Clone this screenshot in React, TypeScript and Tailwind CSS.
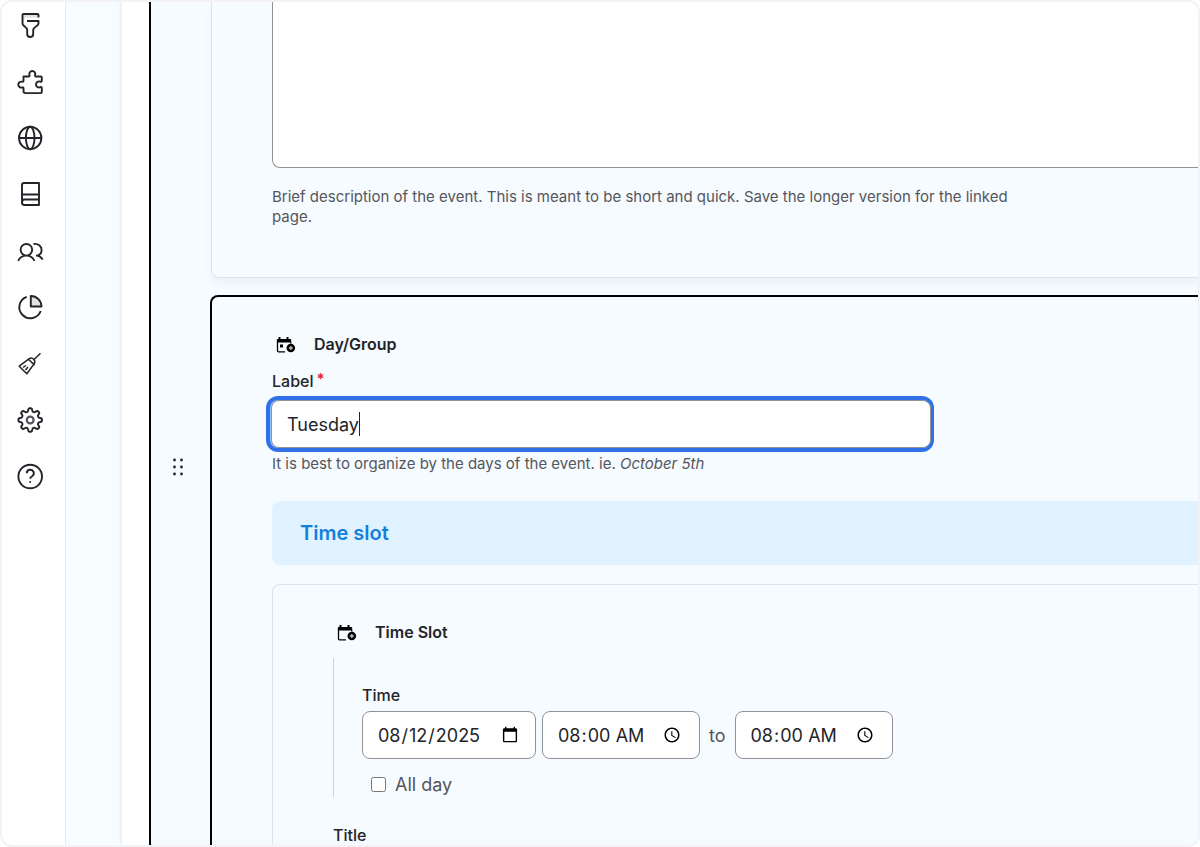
import { useState } from 'react';
import type { ReactNode } from 'react';

type NavItem = {
  label: string;
  icon: ReactNode;
};

// outline of the settings cog, 8 rounded teeth
function gearPath(cx: number, cy: number) {
  const pts: string[] = [];
  for (let i = 0; i < 96; i++) {
    const a = (i / 96) * Math.PI * 2;
    const wave = Math.tanh(2.2 * Math.cos(8 * a));
    const r = 10.2 + 1.6 * wave;
    pts.push(`${(cx + r * Math.sin(a)).toFixed(2)} ${(cy - r * Math.cos(a)).toFixed(2)}`);
  }
  return `M${pts.join('L')}Z`;
}

const navItems: NavItem[] = [
  {
    label: 'Appearance',
    icon: (
      <>
        <path d="M6 2.5h15v3H9L6 9z" fill="#e2e2e2" stroke="none" />
        <path d="M21.5 5.5V3a1 1 0 0 0-1-1h-14a1 1 0 0 0-1 1v8.5c0 3 4.7 3 4.7 6.500v4a3 3 0 0 0 6 0v-4c0-3.5 5.3-3.5 5.3-6.5V9H10" />
      </>
    ),
  },
  {
    label: 'Extend',
    icon: (
      <path d="M6.5 8.5h5.2c.8 0 1-.6.8-1.4a3 3 0 1 1 5.6 0c-.2.8 0 1.4.8 1.4h4.9a1 1 0 0 1 1 1v3.2c0 .9-.7 1.1-1.5 1a3 3 0 1 0 0 5.4c.8-.2 1.5.1 1.5 1v4a1 1 0 0 1-1 1H8.5c-1.200 0-2-.8-2-2v-2.800c0-.9-.6-1-1.4-.8a3 3 0 1 1 0-5.800c.8.2 1.4 0 1.4-.9z" />
    ),
  },
  {
    label: 'Languages',
    icon: (
      <>
        <circle cx="13.2" cy="13" r="11.2" />
        <ellipse cx="13.2" cy="13" rx="4.3" ry="11.2" />
        <path d="M2 13h22.4" />
      </>
    ),
  },
  {
    label: 'Content',
    icon: (
      <path d="M22 2H7a2 2 0 0 0-2 2v17.5A2.5 2.5 0 0 0 7.5 24H22zM5 13.5h17M22 18.5H7.5A2.5 2.5 0 0 0 5 21" />
    ),
  },
  {
    label: 'People',
    icon: (
      <path d="M9.4 6a5.8 5.8 0 1 1 0 11.6a5.8 5.8 0 1 1 0-11.6M1.200 22.800c1.600-3.600 4.600-5.200 8.200-5.200s6.400 1.600 8 5.200M16.600 6c4.400-.8 8 2 8 5.900c0 2.600-1.600 4.800-4.200 5.700H19M20.400 17.600c2.400.5 4 1.600 5.200 4" />
    ),
  },
  {
    label: 'Reports',
    icon: (
      <>
        <path d="M13.8 12.5V2c6 0 10.7 4.7 10.7 10.5z" fill="#e2e2e2" />
        <path d="M9.7 2.9A11 11 0 1 0 23.7 17" />
      </>
    ),
  },
  {
    label: 'Clear cache',
    icon: (
      <g strokeWidth="1.5">
        <path d="M23.5 3.3L16.500 10M12.3 8.7c1.5-1 3.3-.6 4.4.6s1.4 3.2.4 4.6L9.8 23.8L2.2 16.2zM11.500 9.3l6 5.8M6 17.5l3-2M8.5 20l2.5-3" />
      </g>
    ),
  },
  {
    label: 'Configuration',
    icon: (
      <>
        <path d={gearPath(13.2, 13)} />
        <circle cx="13.2" cy="13" r="3.4" stroke="#55555b" strokeWidth="2.2" />
      </>
    ),
  },
  {
    label: 'Help',
    icon: (
      <>
        <circle cx="13.2" cy="13.500" r="11.8" />
        <path d="M9.8 10.300a3.500 3.500 0 1 1 5.300 2.900c-1.300.8-1.900 1.300-1.900 2.500" />
        <circle cx="13.2" cy="19" r="1" fill="#232429" stroke="none" />
      </>
    ),
  },
];

function CalendarPlus({ dot = false }: { dot?: boolean }) {
  return (
    <svg width="20" height="18" viewBox="0 0 20 18" fill="none" aria-hidden="true">
      <path d="M3.5 2v3M11.5 2v3" stroke="#000" strokeWidth="2" />
      <path d="M1.3 4.500h13.400V7H1.3z" fill="#000" stroke="#000" strokeLinejoin="round" />
      <path d="M1.5 7v8.800a1 1 0 0 0 1 1H9M14.8 7v1.5" stroke="#000" strokeWidth="1.3" />
      {dot && <path d="M4 9.500h3v3H4z" fill="#000" />}
      <circle cx="14.8" cy="13" r="4.3" fill="#000" />
      <path d="M14.8 11v4M12.8 13h4" stroke="#b9bdc1" strokeWidth="1.4" />
    </svg>
  );
}

const field =
  'h-12 rounded-lg border border-[#919297] bg-white text-[18px] text-[#232429] outline-none';

export default function App() {
  const [label, setLabel] = useState('Tuesday');
  const [date, setDate] = useState('2025-08-12');
  const [start, setStart] = useState('08:00');
  const [end, setEnd] = useState('08:00');
  const [allDay, setAllDay] = useState(false);

  return (
    <div className="h-screen bg-white font-['Inter',sans-serif] text-[#232429]">
      <div className="flex h-full overflow-hidden rounded-xl border-2 border-[#f3f3f5] bg-white">

        {/* SIDEBAR */}
        <nav className="w-16 shrink-0 border-r border-[#e6eaee] bg-white pt-[10px] pl-[15px]">
          <div className="flex h-[477px] flex-col justify-between">
            {navItems.map((item) => (
              <button key={item.label} aria-label={item.label} className="size-[26px]">
                <svg
                  width="26"
                  height="26"
                  viewBox="0 0 26 26"
                  fill="none"
                  stroke="#232429"
                  strokeWidth="1.9"
                  strokeLinejoin="round"
                  className="overflow-visible"
                >
                  {item.icon}
                </svg>
              </button>
            ))}
          </div>
        </nav>

        <div className="w-14 shrink-0 bg-[#f6fcff]" />

        {/* FORM */}
        <main className="flex min-w-0 flex-1 bg-white pl-[27px] shadow-[0_0_4px_rgba(0,0,0,0.15)]">
          <div className="min-w-0 flex-1 border-l-2 border-black bg-[#f6fbff]">

            {/* DESCRIPTION */}
            <section className="ml-[60px] rounded-bl-lg border-b border-l border-[#dfe4e9] bg-[#f6fbff] pb-[50px] pl-[60px] shadow-[0_6px_8px_rgba(0,0,0,0.04)]">
              <textarea
                aria-label="Description"
                className="block h-[166px] w-full resize-none rounded-bl-lg border-b border-l border-[#919297] bg-white outline-none"
              />
              <p className="mt-[19px] max-w-[760px] text-[15px] leading-5 text-[#55565b]">
                Brief description of the event. This is meant to be short and quick. Save the longer version for the linked page.
              </p>
            </section>

            {/* DAY / GROUP */}
            <div className="mt-[17px] flex items-start">
              <button aria-label="Drag to re-order" className="mt-[162px] flex w-[59px] shrink-0 justify-center pr-[6px]">
                <svg width="12" height="20" viewBox="0 0 12 20" fill="#232429">
                  <circle cx="2.5" cy="3" r="1.4" />
                  <circle cx="9.5" cy="3" r="1.4" />
                  <circle cx="2.5" cy="10" r="1.4" />
                  <circle cx="9.5" cy="10" r="1.4" />
                  <circle cx="2.5" cy="17" r="1.4" />
                  <circle cx="9.5" cy="17" r="1.4" />
                </svg>
              </button>

              <section className="min-w-0 flex-1 rounded-tl-lg border-t-2 border-l-2 border-black bg-[#f6fbff] pt-[35px] pl-[60px]">
                <div className="flex h-6 items-center gap-[18px] pl-1">
                  <CalendarPlus dot />
                  <h3 className="text-[16px] font-semibold">Day/Group</h3>
                </div>

                <label htmlFor="label" className="mt-[15px] block text-[16px] leading-5 font-medium">
                  Label<span className="ml-[3px] align-top text-[15px] leading-4 font-semibold text-[#dc2323]">*</span>
                </label>
                <div className="relative mt-[9px] -ml-px max-w-[660px]">
                  <input
                    id="label"
                    value={label}
                    onChange={(e) => setLabel(e.target.value)}
                    className={`${field} block w-full px-[15px] shadow-[-1px_0_0_0_#8cc4ff,-1px_0_0_4px_#3071ea]`}
                  />
                  <span className="absolute top-3 left-[88px] h-6 w-px bg-[#232429]" />
                </div>
                <p className="mt-[6px] text-[15px] leading-5 text-[#55565b]">
                  It is best to organize by the days of the event. ie. <em>October 5th</em>
                </p>

                <h2 className="mt-[27px] flex h-16 items-center rounded-l-lg bg-[#e0f2ff] pl-7 text-[20px] font-semibold text-[#1380dc]">
                  Time slot
                </h2>

                {/* TIME SLOT */}
                <section className="mt-[19px] rounded-tl-lg border-t border-l border-[#dfe4e9] pt-[35px] pl-[60px]">
                  <div className="flex h-6 items-center gap-[18px] pl-1">
                    <CalendarPlus />
                    <h3 className="text-[16px] font-semibold">Time Slot</h3>
                  </div>

                  <div className="mt-[14px] border-l border-[#cfd1d6] pt-[27px] pb-[3px] pl-7">
                    <label htmlFor="date" className="block text-[16px] leading-5 font-medium">Time</label>
                    <div className="mt-[6px] flex items-center">
                      <input
                        id="date"
                        type="date"
                        value={date}
                        onChange={(e) => setDate(e.target.value)}
                        className={`${field} w-[174px] px-[14px]`}
                      />
                      <input
                        type="time"
                        aria-label="Start time"
                        value={start}
                        onChange={(e) => setStart(e.target.value)}
                        className={`${field} ml-[6px] w-[158px] px-[14px]`}
                      />
                      <span className="px-[9px] text-[18px] text-[#55565b]">to</span>
                      <input
                        type="time"
                        aria-label="End time"
                        value={end}
                        onChange={(e) => setEnd(e.target.value)}
                        className={`${field} w-[158px] px-[14px]`}
                      />
                    </div>
                    <label className="mt-[15px] flex h-5 items-center gap-[9px] pl-[9px] text-[18px] text-[#55565b]">
                      <input
                        type="checkbox"
                        checked={allDay}
                        onChange={(e) => setAllDay(e.target.checked)}
                        className="size-[15px]"
                      />
                      All day
                    </label>
                  </div>

                  <label htmlFor="title" className="mt-7 block text-[16px] leading-5 font-medium">Title</label>
                  <input id="title" className={`${field} mt-2 block w-full px-[15px]`} />
                </section>
              </section>
            </div>
          </div>
        </main>
      </div>
    </div>
  );
}
